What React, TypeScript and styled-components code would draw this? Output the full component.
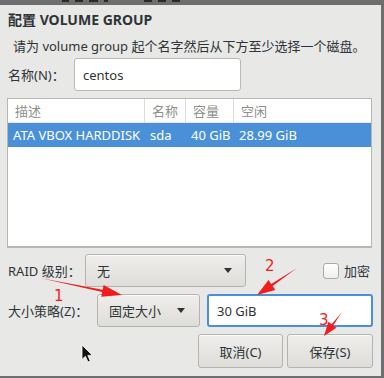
import styled, { createGlobalStyle } from 'styled-components'

const GlobalStyle = createGlobalStyle`
  html, body {
    margin: 0;
    padding: 0;
    background: #6e6e6e;
  }
  body {
    font-family: "Noto Sans", "Noto Sans CJK SC", sans-serif;
    color: #2e3436;
  }
`

const Screen = styled.div`
  position: relative;
  width: 384px;
  height: 378px;
  overflow: hidden;
  background: #6e6e6e;
`

// strip of the window behind the dialog
const BehindStrip = styled.div`
  height: 5px;
  display: flex;
  gap: 6px;
  padding-left: 62px;
  align-items: flex-start;

  i {
    display: block;
    height: 2px;
    background: #2a2a2a;
  }
`

const Dialog = styled.div`
  width: 381px;
  height: 371px;
  box-sizing: border-box;
  background: #e8e8e7;
  padding: 0 8px 0 7px;
  display: flex;
  flex-direction: column;
  font-size: 13px;
`

const Title = styled.div`
  height: 30px;
  line-height: 30px;
  padding-left: 1px;
  font-size: 14px;
  font-weight: bold;
  color: #2e3436;
`

const Subtitle = styled.div`
  height: 22px;
  line-height: 22px;
  padding-left: 6px;
  font-size: 13px;
  white-space: nowrap;
`

const Row = styled.div<{ $top: number }>`
  margin-top: ${p => p.$top}px;
  height: 33px;
  display: flex;
  align-items: center;
`

const Label = styled.div<{ $width: number }>`
  width: ${p => p.$width}px;
  padding-left: 1px;
  flex-shrink: 0;
  white-space: nowrap;
`

const TextInput = styled.div<{ $width: number; $focus?: boolean }>`
  width: ${p => p.$width}px;
  height: 33px;
  box-sizing: border-box;
  background: #fff;
  border: ${p => (p.$focus ? '2px solid #4a90d9' : '1px solid #b8b8b5')};
  border-radius: 3px;
  display: flex;
  align-items: center;
  padding-left: 8px;
  font-size: 13px;
`

const Table = styled.div`
  margin-top: 7px;
  height: 150px;
  width: 365px;
  box-sizing: border-box;
  background: #fff;
  border: 1px solid #b6b6b3;
  border-bottom-width: 2px;
  display: grid;
  grid-template-columns: 137px 41px 48px 1fr;
  grid-template-rows: 24px 24px;
  align-content: start;
`

const HeadCell = styled.div<{ $last?: boolean }>`
  display: flex;
  align-items: center;
  padding-left: 7px;
  color: #8e908b;
  border-right: ${p => (p.$last ? 'none' : '1px solid #dcdcda')};
  border-bottom: 1px solid #e6e6e4;
  white-space: nowrap;
`

const Cell = styled.div<{ $pad: number }>`
  display: flex;
  align-items: center;
  padding-left: ${p => p.$pad}px;
  background: #4a90d9;
  color: #fff;
  white-space: nowrap;
`

const Combo = styled.div<{ $width: number; $pad: number }>`
  width: ${p => p.$width}px;
  height: 33px;
  box-sizing: border-box;
  border: 1px solid #b3b3b0;
  border-radius: 3px;
  background: linear-gradient(#efeeec, #dfddd9);
  box-shadow: inset 0 1px #fbfbfa;
  display: flex;
  align-items: center;
  justify-content: space-between;
  padding: 0 ${p => p.$pad}px 0 11px;
`

const Caret = styled.span`
  width: 0;
  height: 0;
  border-left: 4px solid transparent;
  border-right: 4px solid transparent;
  border-top: 5px solid #2e3436;
`

const CheckWrap = styled.label`
  margin-left: auto;
  margin-right: 3px;
  display: flex;
  align-items: center;
  gap: 5px;
`

const CheckBox = styled.span`
  width: 16px;
  height: 16px;
  box-sizing: border-box;
  border: 1px solid #a9a9a6;
  border-radius: 3px;
  background: linear-gradient(#ffffff, #efefed);
`

const ButtonRow = styled.div`
  margin-top: 7px;
  height: 34px;
  display: flex;
  justify-content: flex-end;
  gap: 4px;
`

const Button = styled.button<{ $width: number }>`
  width: ${p => p.$width}px;
  height: 34px;
  border: 1px solid #b3b3b0;
  border-radius: 3px;
  background: linear-gradient(#efeeec, #dfddd9);
  box-shadow: inset 0 1px #fbfbfa;
  font-family: "Noto Sans", "Noto Sans CJK SC", sans-serif;
  font-size: 13px;
  color: #2e3436;
  padding: 0;
`

const Overlay = styled.svg`
  position: absolute;
  left: 0;
  top: 0;
  pointer-events: none;
`

export default function App() {
  return (
    <>
      <GlobalStyle />
      <Screen>
        <BehindStrip>
          {[7, 8, 9, 4, 8, 8, 8].map((w, i) => (
            <i key={i} style={{ width: w, marginLeft: i === 4 ? 30 : 0 }} />
          ))}
        </BehindStrip>
        <Dialog>
          <Title>配置 VOLUME GROUP</Title>
          <Subtitle>请为 volume group 起个名字然后从下方至少选择一个磁盘。</Subtitle>

          <Row $top={1}>
            <Label $width={66}>名称(N)：</Label>
            <TextInput $width={167}>centos</TextInput>
          </Row>

          <Table>
            <HeadCell>描述</HeadCell>
            <HeadCell>名称</HeadCell>
            <HeadCell>容量</HeadCell>
            <HeadCell $last>空闲</HeadCell>
            <Cell $pad={5}>ATA VBOX HARDDISK</Cell>
            <Cell $pad={5}>sda</Cell>
            <Cell $pad={5}>40 GiB</Cell>
            <Cell $pad={5}>28.99 GiB</Cell>
          </Table>

          <Row $top={6}>
            <Label $width={77}>RAID 级别：</Label>
            <Combo $width={161} $pad={13}>
              <span>无</span>
              <Caret />
            </Combo>
            <CheckWrap>
              <CheckBox />
              <span>加密</span>
            </CheckWrap>
          </Row>

          <Row $top={7}>
            <Label $width={89}>大小策略(Z)：</Label>
            <Combo $width={103} $pad={14}>
              <span>固定大小</span>
              <Caret />
            </Combo>
            <TextInput $width={166} $focus style={{ marginLeft: 7 }}>
              30 GiB
            </TextInput>
          </Row>

          <ButtonRow>
            <Button $width={85}>取消(C)</Button>
            <Button $width={86}>保存(S)</Button>
          </ButtonRow>
        </Dialog>

        <Overlay width="384" height="378" viewBox="0 0 384 378">
          <g fill="#f11d1d">
            <polygon points="40,278 102.6,289.7 103.6,285 122,295 101.2,296.8 102.2,292.1" />
            <polygon points="297,268 271.2,283.9 268.5,279.9 257,295 275.3,289.9 272.6,285.9" />
            <polygon points="342,312 331.6,324.2 328.4,321.8 324,336 336.4,327.8 333.2,325.4" />
          </g>
          <g fill="#f11d1d" fontFamily="DejaVu Sans, sans-serif" fontSize="15">
            <text x="54" y="301">1</text>
            <text x="265" y="271">2</text>
            <text x="319" y="325">3</text>
          </g>
          <path
            d="M82 345 L82 359.5 L85.4 356.3 L88 362 L90.3 361 L87.8 355.4 L92.4 355.4 Z"
            fill="#111"
            stroke="#fff"
            strokeWidth="0.8"
          />
        </Overlay>
      </Screen>
    </>
  )
}
